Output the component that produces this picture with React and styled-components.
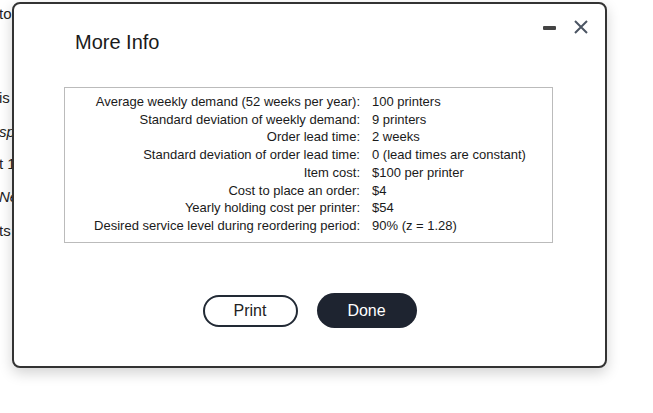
import styled, { createGlobalStyle } from "styled-components";

const Global = createGlobalStyle`
  html, body {
    margin: 0;
    padding: 0;
    background: #fff;
    font-family: "Liberation Sans", Arial, sans-serif;
  }
`;

const Page = styled.div`
  position: relative;
  width: 653px;
  height: 413px;
  overflow: hidden;
  background: #fff;
`;

const Backdrop = styled.div`
  display: flex;
  flex-direction: column;
  padding-top: 5px;
  font-size: 15px;
  color: #222;
`;

const BackLine = styled.div`
  height: 17px;
  margin-left: -1px;
  margin-top: ${(p) => p.gap}px;
  font-style: ${(p) => (p.italic ? "italic" : "normal")};
  white-space: nowrap;
`;

const Dialog = styled.div`
  position: absolute;
  left: 12px;
  top: 2px;
  width: 595px;
  height: 366px;
  box-sizing: border-box;
  border: 2px solid #333;
  border-radius: 8px;
  background: #fff;
  box-shadow: 0 5px 14px rgba(0, 0, 0, 0.18);
  display: flex;
  flex-direction: column;
`;

const Header = styled.div`
  display: flex;
  align-items: flex-start;
  justify-content: space-between;
  padding: 25px 16px 0 61px;
  height: 58px;
  box-sizing: border-box;
`;

const Title = styled.h1`
  margin: 0;
  font-size: 20px;
  font-weight: normal;
  color: #1a1a1a;
  line-height: 26px;
`;

const Controls = styled.div`
  display: flex;
  align-items: center;
  gap: 17px;
  margin-top: -10px;
`;

const Minimize = styled.span`
  display: block;
  width: 13px;
  height: 4px;
  border-radius: 1px;
  background: #444;
  margin-top: 2px;
`;

const Body = styled.div`
  padding: 25px 0 0 50px;
`;

const InfoTable = styled.div`
  width: 489px;
  height: 156px;
  box-sizing: border-box;
  border: 1px solid #bbb;
  display: grid;
  grid-template-columns: 295px 1fr;
  column-gap: 12px;
  align-content: start;
  padding-top: 5px;
  font-size: 13px;
  color: #1a1a1a;
`;

const Label = styled.div`
  text-align: right;
  line-height: 17.7px;
  white-space: nowrap;
`;

const Value = styled.div`
  line-height: 17.7px;
  white-space: nowrap;
`;

const Footer = styled.div`
  display: flex;
  justify-content: center;
  align-items: center;
  gap: 19px;
  margin-top: 50px;
`;

const Button = styled.button`
  font-family: "Liberation Sans", Arial, sans-serif;
  font-size: 16px;
  border-radius: 18px;
  cursor: pointer;
  box-sizing: border-box;
  width: ${(p) => (p.primary ? "100px" : "95px")};
  height: ${(p) => (p.primary ? "35px" : "32px")};
  border: ${(p) => (p.primary ? "none" : "2px solid #222a35")};
  background: ${(p) => (p.primary ? "#1e2430" : "#fff")};
  color: ${(p) => (p.primary ? "#fff" : "#222")};
`;

const rows = [
  ["Average weekly demand (52 weeks per year):", "100 printers"],
  ["Standard deviation of weekly demand:", "9 printers"],
  ["Order lead time:", "2 weeks"],
  ["Standard deviation of order lead time:", "0 (lead times are constant)"],
  ["Item cost:", "$100 per printer"],
  ["Cost to place an order:", "$4"],
  ["Yearly holding cost per printer:", "$54"],
  ["Desired service level during reordering period:", "90% (z = 1.28)"],
];

const back = [
  { t: "to", gap: 0 },
  { t: "is", gap: 67 },
  { t: "spo", gap: 17, italic: true },
  { t: "t 1", gap: 15 },
  { t: "Ne", gap: 16, italic: true },
  { t: "ts", gap: 17 },
];

function App() {
  return (
    <Page>
      <Global />
      <Backdrop>
        {back.map((b) => (
          <BackLine key={b.t} gap={b.gap} italic={b.italic}>
            {b.t}
          </BackLine>
        ))}
      </Backdrop>
      <Dialog>
        <Header>
          <Title>More Info</Title>
          <Controls>
            <Minimize />
            <svg width="16" height="16" viewBox="0 0 16 16">
              <path d="M2 2 L14 14 M14 2 L2 14" stroke="#4b5563" strokeWidth="2" />
            </svg>
          </Controls>
        </Header>
        <Body>
          <InfoTable>
            {rows.map(([l, v]) => (
              <>
                <Label key={l}>{l}</Label>
                <Value key={l + "v"}>{v}</Value>
              </>
            ))}
          </InfoTable>
        </Body>
        <Footer>
          <Button>Print</Button>
          <Button primary>Done</Button>
        </Footer>
      </Dialog>
    </Page>
  );
}

export default App;
